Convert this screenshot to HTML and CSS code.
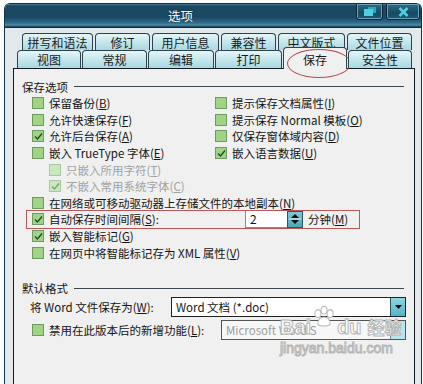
FILE: index.html
```html
<!DOCTYPE html>
<html lang="zh-CN">
<head>
	<meta charset="UTF-8">
	<title>选项</title>
	<link rel="stylesheet" href="styles.css">
</head>
<body>

	<div class="window">
		<div class="titlebar">
			<div class="title">选项</div>
			<div class="winbtn restore">
				<svg width="12" height="9" viewBox="0 0 12 9"><rect x="4" y="0" width="8" height="6" fill="#2aa6bd"/><rect x="0" y="2" width="9" height="7" fill="#4fcfe0"/></svg>
			</div>
			<div class="winbtn close">
				<svg width="11" height="10" viewBox="0 0 11 10"><path d="M1.5 1 L9.5 9 M9.5 1 L1.5 9" stroke="#4fcfe0" stroke-width="2.6"/></svg>
			</div>
		</div>

		<div class="frame">
			<div class="tabrow upper">
				<div class="tab">拼写和语法</div>
				<div class="tab">修订</div>
				<div class="tab">用户信息</div>
				<div class="tab">兼容性</div>
				<div class="tab">中文版式</div>
				<div class="tab">文件位置</div>
			</div>
			<div class="tabrow lower">
				<div class="tab">视图</div>
				<div class="tab">常规</div>
				<div class="tab">编辑</div>
				<div class="tab">打印</div>
				<div class="tab active">保存</div>
				<div class="tab">安全性</div>
			</div>

			<div class="panel">
				<div class="legend"><span>保存选项</span><i></i></div>

				<div class="pairs">
					<div class="chk"><span class="box"></span>保留备份(<u>B</u>)</div>
					<div class="chk"><span class="box"></span>提示保存文档属性(<u>I</u>)</div>
					<div class="chk"><span class="box"></span>允许快速保存(<u>F</u>)</div>
					<div class="chk"><span class="box"></span>提示保存 Normal 模板(<u>O</u>)</div>
					<div class="chk"><span class="box on"><svg width="9" height="9" viewBox="0 0 9 9"><path d="M1 4.5 L3.5 7 L8 1.5" fill="none" stroke="#1d4f1d" stroke-width="1.4"/></svg></span>允许后台保存(<u>A</u>)</div>
					<div class="chk"><span class="box"></span>仅保存窗体域内容(<u>D</u>)</div>
					<div class="chk"><span class="box"></span>嵌入 TrueType 字体(<u>E</u>)</div>
					<div class="chk"><span class="box on"><svg width="9" height="9" viewBox="0 0 9 9"><path d="M1 4.5 L3.5 7 L8 1.5" fill="none" stroke="#1d4f1d" stroke-width="1.4"/></svg></span>嵌入语言数据(<u>U</u>)</div>
				</div>

				<div class="chk indent off"><span class="box"></span>只嵌入所用字符(<u>T</u>)</div>
				<div class="chk indent off"><span class="box on"><svg width="9" height="9" viewBox="0 0 9 9"><path d="M1 4.5 L3.5 7 L8 1.5" fill="none" stroke="#7ea07e" stroke-width="1.4"/></svg></span>不嵌入常用系统字体(<u>C</u>)</div>
				<div class="chk row"><span class="box"></span>在网络或可移动驱动器上存储文件的本地副本(<u>N</u>)</div>
				<div class="chk row autosave">
					<span class="box on"><svg width="9" height="9" viewBox="0 0 9 9"><path d="M1 4.5 L3.5 7 L8 1.5" fill="none" stroke="#1d4f1d" stroke-width="1.4"/></svg></span>
					<span class="caption">自动保存时间间隔(<u>S</u>):</span>
					<span class="num">2</span>
					<span class="spin">
						<svg width="14" height="14" viewBox="0 0 14 14"><path d="M3 6 L7 2 L11 6 Z M3 8 L7 12 L11 8 Z" fill="#111"/><path d="M1 7 H13" stroke="#e8f6f8" stroke-width="1"/></svg>
					</span>
					<span class="unit">分钟(<u>M</u>)</span>
				</div>
				<div class="chk row"><span class="box on"><svg width="9" height="9" viewBox="0 0 9 9"><path d="M1 4.5 L3.5 7 L8 1.5" fill="none" stroke="#1d4f1d" stroke-width="1.4"/></svg></span>嵌入智能标记(<u>G</u>)</div>
				<div class="chk row"><span class="box"></span>在网页中将智能标记存为 XML 属性(<u>V</u>)</div>

				<div class="legend second"><span>默认格式</span><i></i></div>

				<div class="fmt">
					<span class="lbl">将 Word 文件保存为(<u>W</u>):</span>
					<div class="combo wide">
						<span class="val">Word 文档 (*.doc)</span>
						<span class="drop"><svg width="7" height="4" viewBox="0 0 7 4"><path d="M0 0 H7 L3.5 4 Z" fill="#111"/></svg></span>
					</div>
				</div>
				<div class="fmt second">
					<div class="chk"><span class="box"></span>禁用在此版本后的新增功能(<u>L</u>):</div>
					<div class="combo narrow off">
						<span class="val">Microsoft Word S</span>
						<span class="drop"></span>
					</div>
				</div>

				<div class="watermark">
					<div class="brand">Bai<svg width="26" height="24" viewBox="0 0 30 26"><g fill="#fff" stroke="#b9b9b9" stroke-width="1.2"><ellipse cx="8" cy="9" rx="3.5" ry="4.5"/><ellipse cx="15" cy="5" rx="3.5" ry="4.5"/><ellipse cx="22" cy="9" rx="3.5" ry="4.5"/><path d="M8 22 C8 15 12 13 15 13 C18 13 22 15 22 22 C19 24 11 24 8 22 Z"/></g></svg>du<span>经验</span></div>
					<div class="site">jingyan.baidu.com</div>
				</div>
			</div>
		</div>
	</div>

</body>
</html>
```

FILE: styles.css
```css
*{
	box-sizing: border-box;
}
body{
	margin: 0;
	padding: 0;
	background-color: #fbfbfb;
	font-family: "Noto Sans CJK SC", sans-serif;
	font-size: 11.5px;
	color: #151515;
	overflow: hidden;
}
u{
	text-decoration: underline;
	text-underline-offset: 1px;
}

/*============================================*/
.window{
	margin: 3px 0 0 4px;
	width: 418px;
	height: 381px;
	background-color: #e2e9ec;
	border: 1px solid #123247;
	border-bottom: none;
	border-radius: 6px 6px 0 0;
	display: flex;
	flex-direction: column;
	overflow: hidden;
}

/*title bar*/
.titlebar{
	height: 24px;
	flex: none;
	display: flex;
	align-items: flex-start;
	background: linear-gradient(to bottom, #4a829c 0, #1c4862 8%, #1a4761 55%, #2a6582 78%, #4a8aa6 92%, #15394e 100%);
	border-bottom: 1px solid #0e2a3a;
	padding-right: 1px;
}
.title{
	flex: 1;
	text-align: center;
	color: #fff;
	font-size: 12.5px;
	line-height: 23px;
	text-shadow: 0 0 2px #0b2838;
}
.winbtn{
	height: 17px;
	margin-top: -1px;
	display: flex;
	align-items: center;
	justify-content: center;
	background: linear-gradient(to bottom, #2b6d88, #184a62 60%, #1f5874);
	border: 1px solid #0b2636;
	box-shadow: inset 0 0 0 1px #6aa3b9;
	border-radius: 0 0 3px 3px;
}
.restore{
	width: 27px;
	margin-right: 3px;
}
.close{
	width: 34px;
}

/*frame and tabs*/
.frame{
	flex: 1;
	padding: 5px 6px 0 8px;
	display: flex;
	flex-direction: column;
}
.tabrow{
	display: flex;
	flex: none;
}
.tab{
	display: flex;
	align-items: center;
	justify-content: center;
	font-size: 12px;
	color: #1a1a1a;
	background: linear-gradient(to bottom, #e6f6f8, #c4e7ed 50%, #a9d8e1);
	border: 1px solid #2c434d;
	border-bottom: none;
	border-radius: 4px 4px 0 0;
	position: relative;
}
.upper{
	margin-left: 9px;
	gap: 2px;
	height: 17px;
}
.upper .tab:nth-child(1){ width: 71px; }
.upper .tab:nth-child(2){ width: 55px; }
.upper .tab:nth-child(3){ width: 67px; }
.upper .tab:nth-child(4){ width: 55px; }
.upper .tab:nth-child(5){ width: 67px; }
.upper .tab:nth-child(6){ width: 65px; }

.lower{
	margin-left: 4px;
	gap: 1px;
	height: 18px;
	align-items: flex-end;
	position: relative;
	z-index: 2;
}
.lower .tab{ height: 18px; }
.lower .tab:nth-child(1){ width: 64px; }
.lower .tab:nth-child(2){ width: 65px; }
.lower .tab:nth-child(3){ width: 66px; }
.lower .tab:nth-child(4){ width: 67px; }
.lower .tab:nth-child(5){ width: 64px; }
.lower .tab:nth-child(6){ width: 64px; }
.lower .tab.active{
	height: 22px;
	margin-bottom: -1px;
	background: #f0f0f0;
	padding-top: 1px;
}
/* red hand-drawn ring over the active tab */
.tab.active::after{
	content: "";
	position: absolute;
	left: 3px;
	top: 1px;
	width: 62px;
	height: 27px;
	border: 1px solid #b24a4a;
	border-radius: 50%;
}

/*main panel*/
.panel{
	flex: 1;
	background-color: #f0f0f0;
	border: 1px solid #131c22;
	border-bottom: none;
	padding-top: 9px;
	position: relative;
}
.legend{
	display: flex;
	align-items: center;
	height: 17px;
	padding-left: 8px;
	padding-right: 10px;
}
.legend i{
	flex: 1;
	height: 1px;
	margin-left: 6px;
	background-color: #3f484e;
}
.legend.second{
	margin-top: 19px;
}

.chk{
	display: flex;
	align-items: center;
	height: 16.6px;
	white-space: nowrap;
}
.box{
	width: 12px;
	height: 12px;
	flex: none;
	margin-right: 5px;
	background-color: #9fd487;
	border: 1px solid #6f9a62;
	display: flex;
	align-items: center;
	justify-content: center;
}
.pairs{
	display: grid;
	grid-template-columns: 183px 1fr;
	padding-left: 18px;
}
.row{
	padding-left: 18px;
}
.indent{
	padding-left: 35px;
}
.off{
	color: #a2a2a2;
}
.off .box{
	background-color: #c9e8bb;
	border-color: #a9c8a0;
}

/*auto save row*/
.autosave{
	position: relative;
}
.autosave::after{
	content: "";
	position: absolute;
	left: 12px;
	top: -1px;
	width: 332px;
	height: 17px;
	border: 1px solid #c05555;
	pointer-events: none;
}
.caption{
	width: 196px;
}
.num{
	width: 42px;
	height: 18px;
	background-color: #fff;
	border: 1px solid #8a8a8a;
	border-right: none;
	padding-left: 4px;
	line-height: 16px;
	font-size: 12px;
}
.spin{
	width: 16px;
	height: 17px;
	background: linear-gradient(to bottom, #7fc8d4, #4aa6b6);
	border: 1px solid #2c5560;
	display: flex;
	align-items: center;
	justify-content: center;
}
.unit{
	margin-left: 5px;
}

/*default format*/
.fmt{
	display: flex;
	align-items: center;
	height: 20px;
	padding-left: 16px;
	padding-right: 8px;
}
.fmt.second{
	margin-top: 3px;
	padding-left: 18px;
}
.combo{
	margin-left: auto;
	height: 20px;
	display: flex;
	align-items: center;
	background-color: #fff;
	border: 1px solid #222;
}
.combo .val{
	flex: 1;
	padding-left: 4px;
}
.combo.wide{ width: 235px; }
.combo.narrow{ width: 185px; }
.drop{
	width: 15px;
	height: 18px;
	background: linear-gradient(to bottom, #8fd6e2, #56b3c4);
	border-left: 1px solid #2c5560;
	display: flex;
	align-items: center;
	justify-content: center;
}
.combo.off{
	background-color: #f7f7f7;
	border-color: #555;
	color: #9c9c9c;
}
.combo.off .drop{
	background: #b8e6ee;
	border-left-color: #6c8f96;
}

/*watermark*/
.watermark{
	position: absolute;
	left: 266px;
	top: 236px;
	width: 126px;
	white-space: nowrap;
	color: #fff;
	-webkit-text-stroke: 1px #b4b4b4;
	font-family: "Liberation Sans", sans-serif;
	font-weight: bold;
	pointer-events: none;
}
.brand{
	display: flex;
	align-items: flex-end;
	font-size: 20px;
	line-height: 22px;
}
.brand svg{
	flex: none;
	margin-bottom: 9px;
}
.brand span{
	font-family: "Noto Sans CJK SC", sans-serif;
	font-size: 17px;
	margin-left: 6px;
}
.site{
	font-size: 14px;
	font-weight: normal;
	margin-top: 2px;
}
```
